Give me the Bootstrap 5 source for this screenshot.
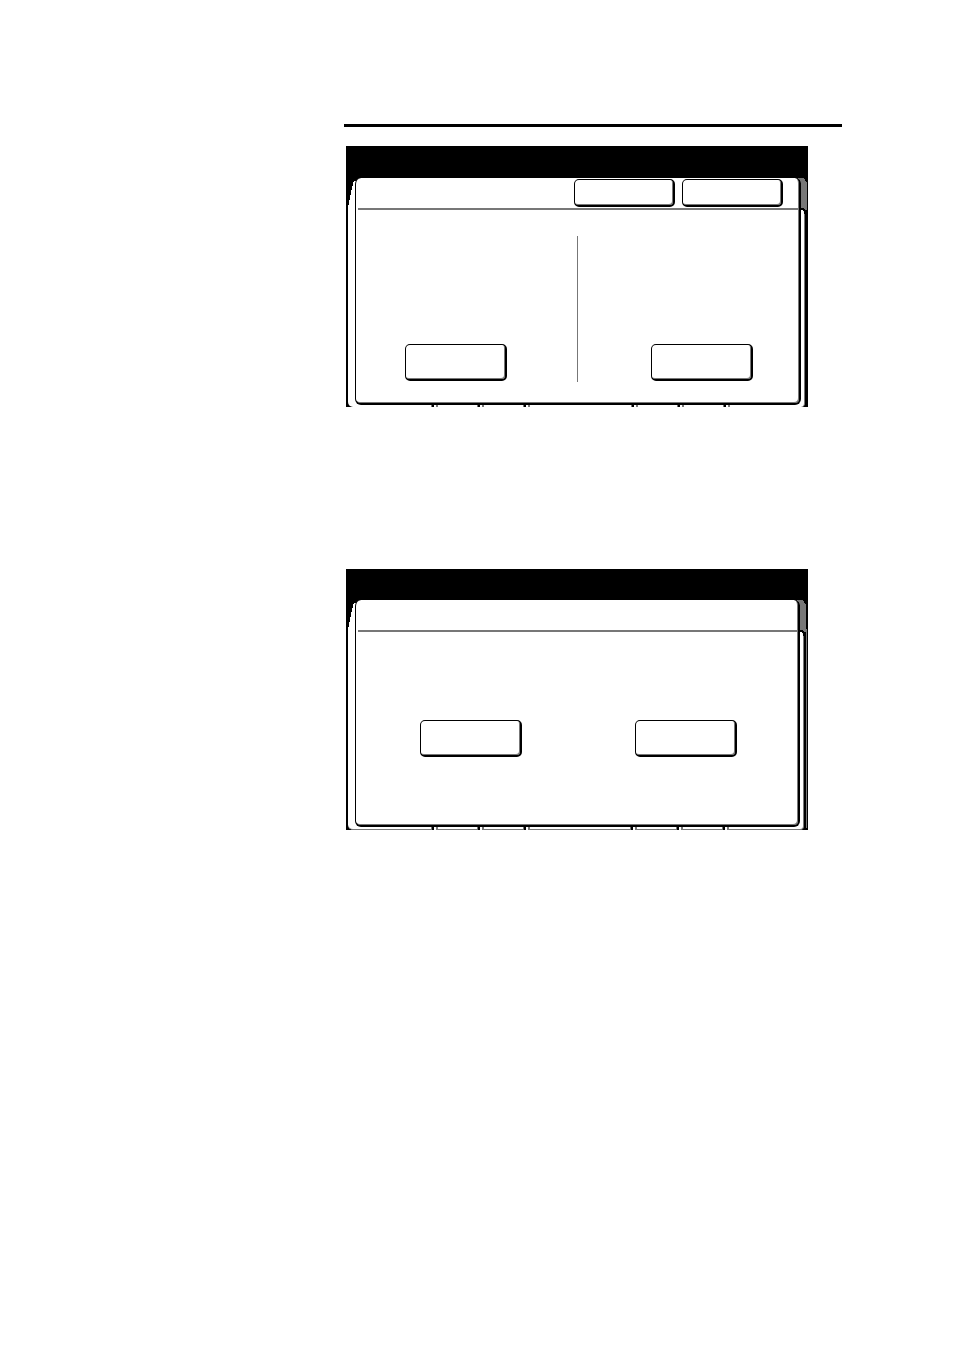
<!DOCTYPE html>
<html lang="en">
<head>
<meta charset="utf-8">
<meta name="viewport" content="width=device-width, initial-scale=1">
<title>Touch panel screens</title>
<link href="https://cdn.jsdelivr.net/npm/bootstrap@5.3.0/dist/css/bootstrap.min.css" rel="stylesheet">
<style>
  body { background: #fff; font-family: "Liberation Sans", Arial, sans-serif; }
  .manual-page { padding: 124px 112px 64px 344px; }
  .head-rule { height: 3px; background: #000; border: 0; opacity: 1; margin: 0 0 19px; }
  .screens { gap: 162px; padding-left: 2px; }
  .screen {
    --head: 32px; --edge: 7px; --line: 3px; --foot: 0px;
    background: #000; max-width: 462px; width: 100%;
    padding: var(--head) var(--edge) 2px 9px;
  }
  .screen-confirm { --head: 31px; --edge: 8px; --line: 4px; --foot: 1px; padding-bottom: 3px; }
  .backing {
    top: calc(var(--head) + 31px); bottom: 0; left: 2px; right: var(--line);
    background: #fff; border-right: 1px solid #777; border-bottom: var(--foot) solid #777;
    border-radius: 0 4px 4px 5px;
  }
  .screen-confirm::after {
    content: ""; position: absolute; right: 1px; top: 62px; bottom: 2px; width: 1px; background: #777;
  }
  .wedge { left: 2px; top: var(--head); width: 8px; height: 32px; }
  .side-tab { right: 0; top: var(--head); width: 12px; height: 36px; }
  .ticks { bottom: 0; height: 3px; gap: 39px; }
  .ticks-left { left: 85px; }
  .ticks-right { right: calc(var(--edge) + 71px); }
  .ticks span {
    width: 7px;
    background: linear-gradient(90deg, #777 1px, #000 1px 3px, #fff 3px 5px, #777 5px);
  }
  .panel {
    background: #fff; border: solid #000; border-width: 0 2px 2px 1px;
    border-radius: 6px; box-shadow: inset -1px -1px 0 #777;
  }
  .panel-head { height: 32px; border-bottom: 2px solid #777; padding: 1px 16px 0 0; margin-left: 2px; gap: 7px; }
  .key {
    width: 102px; height: 37px; background: #fff; border: solid #000;
    border-width: 1px 2px 2px 1px; border-radius: 5px; padding: 0;
    box-shadow: inset -1px -1px 0 #777;
  }
  .panel-head .key { width: 101px; height: 28px; }
  .choice { grid-template-columns: 1fr 1px 1fr; padding: 26px 0 21px; }
  .choice-left { padding: 0 21px 1px 0; }
  .choice-right { padding: 0 0 1px 27px; }
  .divider { height: 146px; background: #777; }
  .answers { padding: 88px 0 68px 2px; gap: 113px; }
</style>
</head>
<body>
<main class="manual-page">
  <hr class="head-rule">
  <div class="screens d-flex flex-column">

    <section class="screen position-relative" aria-label="Selection screen">
      <div class="backing position-absolute"></div>
      <svg class="wedge position-absolute" viewBox="0 0 8 32" shape-rendering="crispEdges" aria-hidden="true"><path d="M0 32V30L1 25L2 20L3 15L4 10L5 6L6 3H8V32Z" fill="#fff"/></svg>
      <div class="ticks ticks-left position-absolute d-flex"><span></span><span></span><span></span></div>
      <div class="ticks ticks-right position-absolute d-flex"><span></span><span></span><span></span></div>
      <svg class="side-tab position-absolute" viewBox="0 0 12 36" shape-rendering="crispEdges" aria-hidden="true"><path d="M0 0H7L9 2L11 5V32H9L7 31H5V6L3 2Z" fill="#777"/><path d="M0 0H1L4 3L5 6H3Z" fill="#000"/><path d="M5 30H8V31H9V32H10V36H8V33H7V32H5Z" fill="#000"/></svg>
      <div class="panel position-relative">
        <div class="panel-head d-flex justify-content-end">
          <button type="button" class="key" aria-label="Cancel"></button>
          <button type="button" class="key" aria-label="Save"></button>
        </div>
        <div class="choice d-grid">
          <div class="choice-left d-flex justify-content-center align-items-end"><button type="button" class="key" aria-label="Left option"></button></div>
          <div class="divider"></div>
          <div class="choice-right d-flex justify-content-center align-items-end"><button type="button" class="key" aria-label="Right option"></button></div>
        </div>
      </div>
    </section>

    <section class="screen screen-confirm position-relative" aria-label="Confirmation screen">
      <div class="backing position-absolute"></div>
      <svg class="wedge position-absolute" viewBox="0 0 8 32" shape-rendering="crispEdges" aria-hidden="true"><path d="M0 32V30L1 25L2 20L3 15L4 10L5 6L6 3H8V32Z" fill="#fff"/></svg>
      <div class="ticks ticks-left position-absolute d-flex"><span></span><span></span><span></span></div>
      <div class="ticks ticks-right position-absolute d-flex"><span></span><span></span><span></span></div>
      <svg class="side-tab position-absolute" viewBox="0 0 12 36" shape-rendering="crispEdges" aria-hidden="true"><path d="M0 0H6L8 2L10 5V29H11V36H10V32H8L6 31H4V6L2 2Z" fill="#777"/><path d="M0 0H1L3 3L4 6H2Z" fill="#000"/><path d="M4 30H7V31H8V32H9V36H7V33H6V32H4Z" fill="#000"/></svg>
      <div class="panel position-relative">
        <div class="panel-head"></div>
        <div class="answers d-flex justify-content-center">
          <button type="button" class="key" aria-label="Yes"></button>
          <button type="button" class="key" aria-label="No"></button>
        </div>
      </div>
    </section>

  </div>
</main>
<script src="https://cdn.jsdelivr.net/npm/bootstrap@5.3.0/dist/js/bootstrap.bundle.min.js"></script>
</body>
</html>
